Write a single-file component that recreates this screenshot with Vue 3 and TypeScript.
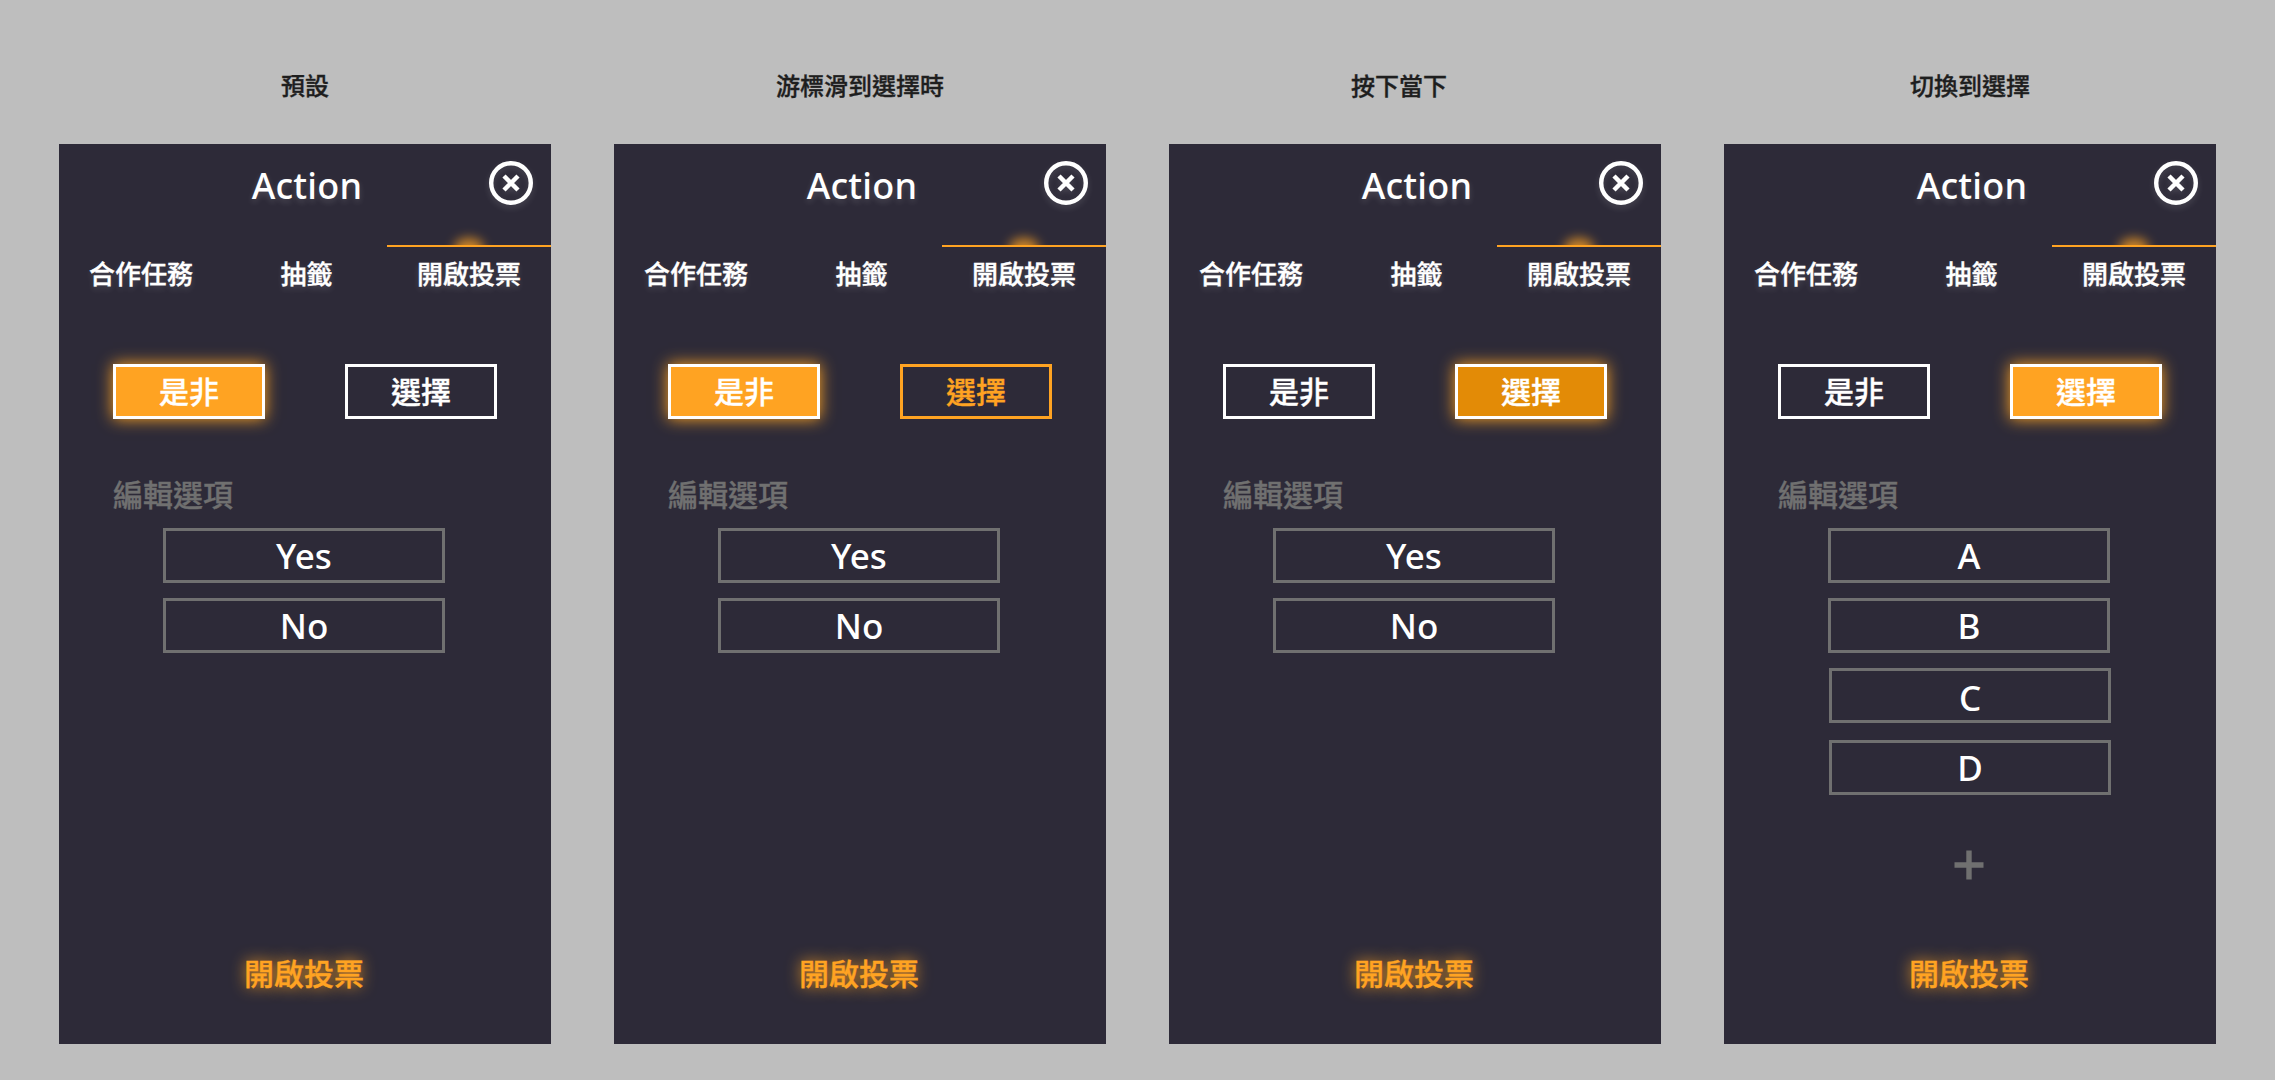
<script setup lang="ts">
type ToggleState = 'idle' | 'active' | 'hover' | 'pressed'

interface Screen {
  caption: string
  yesNo: ToggleState
  choice: ToggleState
  options: string[]
  canAdd: boolean
}

const tabs: string[] = ['合作任務', '抽籤', '開啟投票']
const activeTab = 2

const screens: Screen[] = [
  { caption: '預設', yesNo: 'active', choice: 'idle', options: ['Yes', 'No'], canAdd: false },
  { caption: '游標滑到選擇時', yesNo: 'active', choice: 'hover', options: ['Yes', 'No'], canAdd: false },
  { caption: '按下當下', yesNo: 'idle', choice: 'pressed', options: ['Yes', 'No'], canAdd: false },
  { caption: '切換到選擇', yesNo: 'idle', choice: 'active', options: ['A', 'B', 'C', 'D'], canAdd: true },
]
</script>

<template>
  <main class="board">
    <section v-for="screen in screens" :key="screen.caption" class="column">
      <h2 class="caption">{{ screen.caption }}</h2>
      <article class="panel">
        <header class="head">
          <h1 class="title">Action</h1>
          <svg class="close" width="44" height="44" viewBox="0 0 44 44" fill="none" stroke="#fff">
            <circle cx="22" cy="22" r="19.8" stroke-width="4.4" />
            <path d="M15 15L29 29M29 15L15 29" stroke-width="4.5" />
          </svg>
        </header>
        <nav class="tabs">
          <div v-for="(tab, i) in tabs" :key="tab" class="tab" :class="{ current: i === activeTab }">
            <span v-if="i === activeTab" class="halo"></span>
            <span class="tab-text">{{ tab }}</span>
          </div>
        </nav>
        <div class="toggles">
          <button class="toggle" :class="screen.yesNo">是非</button>
          <button class="toggle" :class="screen.choice">選擇</button>
        </div>
        <h3 class="edit">編輯選項</h3>
        <ul class="options">
          <li v-for="option in screen.options" :key="option" class="option">{{ option }}</li>
        </ul>
        <svg v-if="screen.canAdd" class="add" width="30" height="30" viewBox="0 0 30 30">
          <path d="M15 0.5V29.5M0.5 15H29.5" stroke="#707070" stroke-width="5.4" />
        </svg>
        <button class="submit">開啟投票</button>
      </article>
    </section>
  </main>
</template>

<style>
body {
  background: #bebebe;
}
</style>

<style scoped>
.board {
  box-sizing: border-box;
  width: 2275px;
  height: 1080px;
  padding-left: 59px;
  display: flex;
  gap: 63px;
  overflow: hidden;
  background: #bebebe;
  color: #fff;
  font-family: 'Noto Sans', 'Noto Sans CJK TC', sans-serif;
  font-weight: 500;
}

h1,
h2,
h3,
ul {
  margin: 0;
  padding: 0;
  font-weight: 500;
}

button {
  box-sizing: border-box;
  padding: 0;
  border: 0;
  background: none;
  color: inherit;
  font: inherit;
}

/* Brings the Chinese glyphs up to a medium weight */
.caption,
.tab-text,
.toggle,
.edit,
.submit {
  -webkit-text-stroke: 0.35px currentColor;
}

.column {
  width: 492px;
}

.caption {
  height: 144px;
  padding-top: 68px;
  box-sizing: border-box;
  text-align: center;
  font-size: 24px;
  line-height: 36px;
  color: #1e1e1e;
}

.column:nth-child(3) .caption {
  padding-right: 32px;
}

.panel {
  height: 900px;
  display: flex;
  flex-direction: column;
  background: #2d2a38;
}

.head {
  height: 101px;
  display: grid;
  grid-template-columns: 62px 1fr 62px;
  align-items: start;
  flex: none;
}

.title {
  grid-column: 2;
  padding-top: 17px;
  padding-left: 4px;
  text-align: center;
  font-size: 36px;
  line-height: 49px;
  letter-spacing: 0.2px;
  text-shadow: 0 3px 6px rgba(255, 255, 255, 0.16);
}

.close {
  margin-top: 17px;
  filter: drop-shadow(0 3px 3px rgba(255, 255, 255, 0.14));
}

.tabs {
  height: 119px;
  flex: none;
  display: flex;
}

.tab {
  position: relative;
  box-sizing: border-box;
  width: 164px;
  height: 60px;
  padding-top: 8px;
  border-top: 2px solid transparent;
  text-align: center;
  font-size: 26px;
  line-height: 38px;
  text-shadow: 0 3px 6px rgba(255, 255, 255, 0.16);
}

.tab:nth-child(2) {
  padding-left: 3px;
}

.current {
  border-top-color: #ffa322;
}

/* Half-round glow that sits on the current tab's line */
.halo {
  position: absolute;
  left: 47px;
  bottom: 60px;
  width: 70px;
  height: 24px;
  overflow: hidden;
}

.halo::before {
  content: '';
  display: block;
  width: 30px;
  height: 20px;
  margin: 17px auto 0;
  border-radius: 50%;
  background: #ffa322;
  opacity: 0.75;
  filter: blur(5.5px);
}

.toggles {
  display: flex;
  justify-content: space-between;
  padding: 0 54px;
}

.toggle {
  width: 152px;
  height: 55px;
  border: 3px solid #fff;
  font-size: 30px;
  line-height: 49px;
}

.active,
.pressed {
  background: #ffa322;
  box-shadow: 0 0 15px #ffa322;
}

.pressed {
  background: #e38b06;
}

.hover {
  border-color: #ffa322;
  color: #ffa322;
}

.edit {
  margin-top: 54px;
  padding-left: 54px;
  height: 55px;
  font-size: 30px;
  line-height: 44px;
  color: #707070;
}

.options {
  display: flex;
  flex-direction: column;
  gap: 15px;
  margin-left: 104px;
  list-style: none;
}

.option {
  box-sizing: border-box;
  width: 282px;
  height: 55px;
  border: 3px solid #707070;
  text-align: center;
  font-size: 35px;
  line-height: 49px;
}

.option:nth-child(n + 3) {
  margin-left: 1px;
}

.option:nth-child(3) {
  line-height: 53px;
}

.option:nth-child(4) {
  margin-top: 2px;
}

.add {
  align-self: center;
  margin-top: 55px;
  margin-right: 2px;
}

.submit {
  align-self: center;
  margin-top: auto;
  margin-right: 2px;
  margin-bottom: 48px;
  font-size: 30px;
  line-height: 44px;
  color: #ffa322;
  text-shadow: 0 0 15px #ffa322;
}
</style>
